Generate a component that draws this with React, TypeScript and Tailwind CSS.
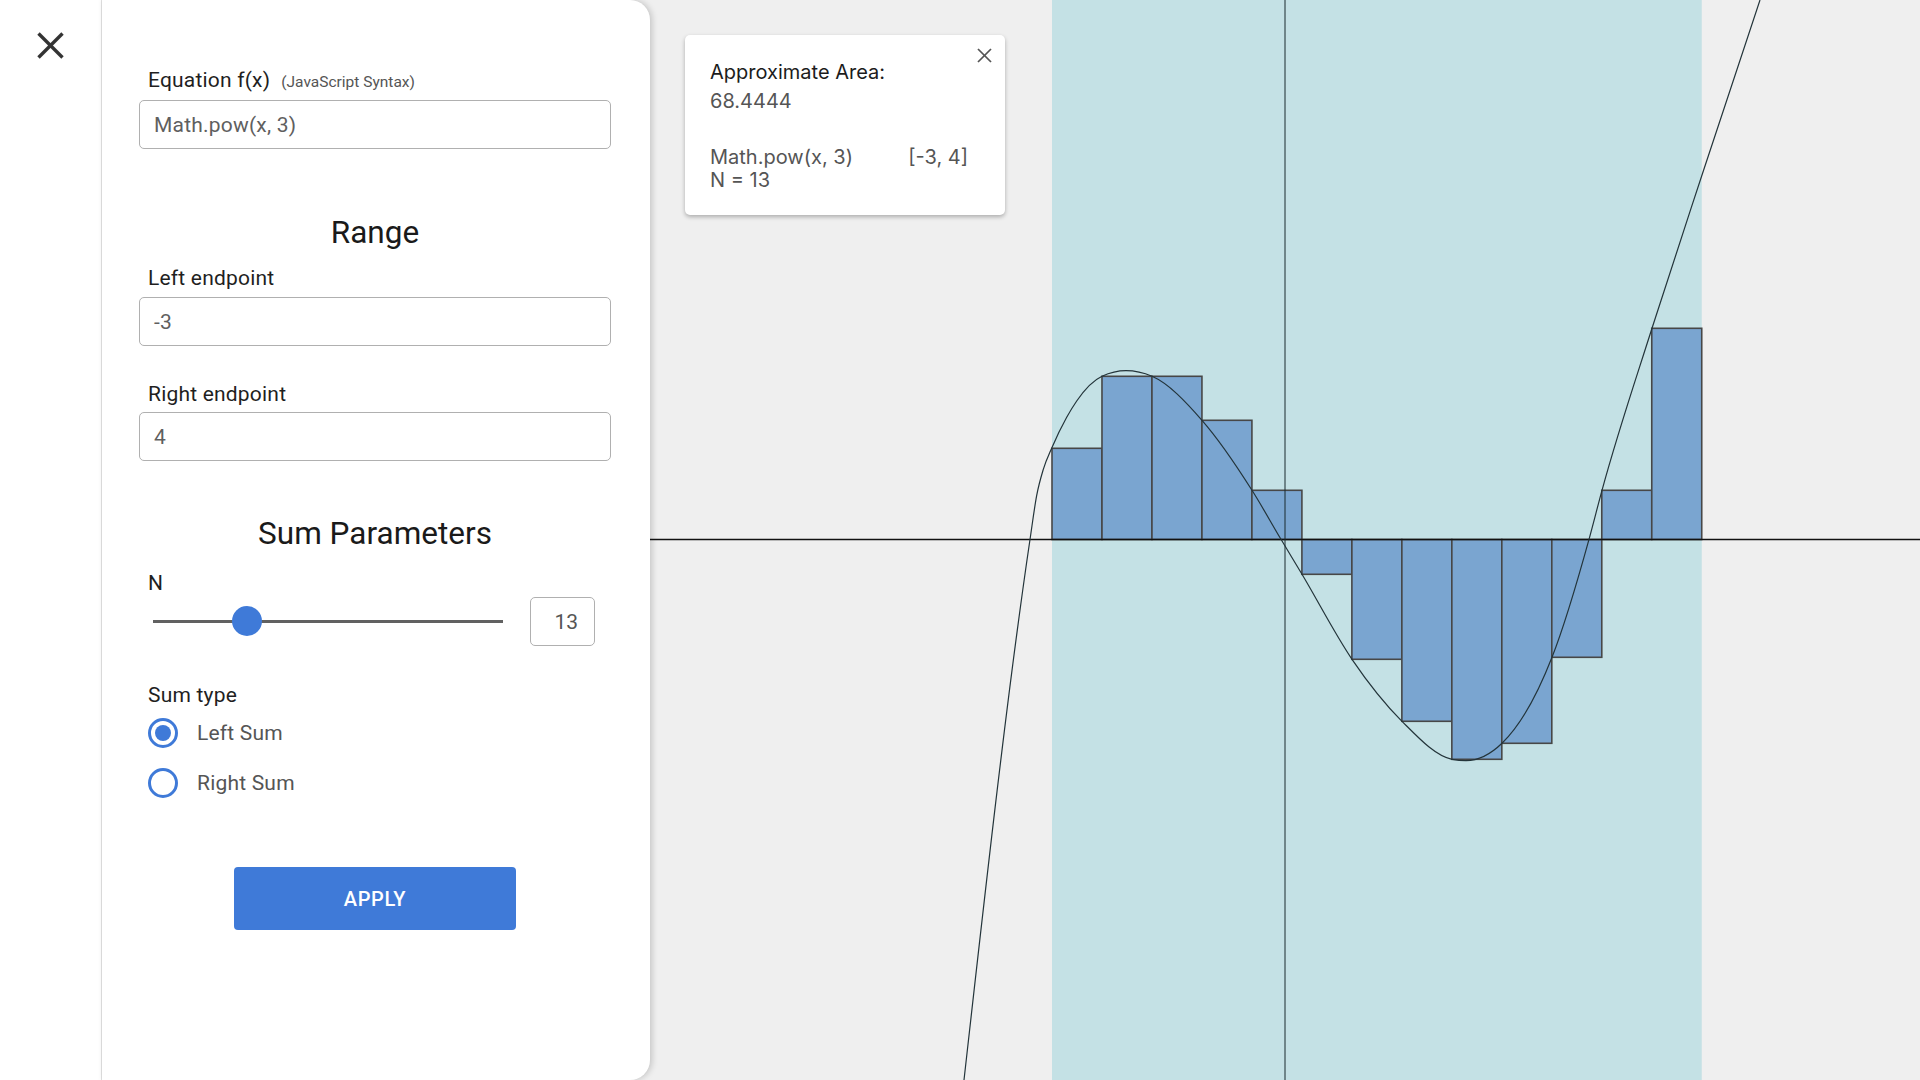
import React from "react";

type P = [number, number];

function monotonePath(pts: P[]): string {
  const n = pts.length;
  const h: number[] = [];
  const s: number[] = [];
  for (let i = 0; i < n - 1; i++) {
    h.push(pts[i + 1][0] - pts[i][0]);
    s.push((pts[i + 1][1] - pts[i][1]) / h[i]);
  }
  const m: number[] = new Array(n).fill(0);
  for (let i = 1; i < n - 1; i++) {
    const s0 = s[i - 1];
    const s1 = s[i];
    const h0 = h[i - 1];
    const h1 = h[i];
    const p = (s0 * h1 + s1 * h0) / (h0 + h1);
    m[i] =
      (Math.sign(s0) + Math.sign(s1)) *
        Math.min(Math.abs(s0), Math.abs(s1), 0.5 * Math.abs(p)) || 0;
  }
  m[0] = (3 * s[0] - m[1]) / 2;
  m[n - 1] = (3 * s[n - 2] - m[n - 2]) / 2;
  let d = `M${pts[0][0]},${pts[0][1]}`;
  for (let i = 0; i < n - 1; i++) {
    const [x0, y0] = pts[i];
    const [x1, y1] = pts[i + 1];
    const dx = h[i] / 3;
    d += ` C${x0 + dx},${y0 + m[i] * dx} ${x1 - dx},${y1 - m[i + 1] * dx} ${x1},${y1}`;
  }
  return d;
}

const CURVE: P[] = [
  [964, 1080],
  [1030, 539.5],
  [1036.7, 495.4],
  [1043.3, 469.4],
  [1052, 447.5],
  [1066.7, 417.3],
  [1076.7, 401],
  [1102, 376.3],
  [1126, 370.7],
  [1152, 376.3],
  [1202, 420.3],
  [1252, 490.3],
  [1281, 539.3],
  [1302, 574.3],
  [1352, 659.3],
  [1402, 721.3],
  [1452, 759.3],
  [1466, 760.7],
  [1502, 743.3],
  [1552, 657.3],
  [1589, 539.3],
  [1602, 490.3],
  [1652, 328.3],
  [1702, 175],
  [1760, 0],
];

const RECT_Y = [448.3, 376.3, 376.3, 420.3, 490.3, 574.3, 659.3, 721.3, 759.3, 743.3, 657.3, 490.3, 328.3];
const AXIS_Y = 539.5;
const BAND_X0 = 1052;
const RW = 49.98;

function Graph() {
  const d = monotonePath(CURVE);
  return (
    <svg
      className="absolute inset-0"
      width={1270}
      height={1080}
      viewBox="650 0 1270 1080"
    >
      <rect x={650} y={0} width={1270} height={1080} fill="#efefef" />
      <rect x={BAND_X0} y={0} width={RW * 13} height={1080} fill="#c4e1e5" />
      {RECT_Y.map((y, i) => {
        const x = BAND_X0 + RW * i;
        const top = Math.min(y, AXIS_Y);
        const hh = Math.abs(y - AXIS_Y);
        return (
          <rect
            key={i}
            x={x}
            y={top}
            width={RW}
            height={hh}
            fill="#7aa5d0"
            stroke="#474747"
            strokeWidth={1.6}
          />
        );
      })}
      <line x1={650} y1={AXIS_Y} x2={1920} y2={AXIS_Y} stroke="#111" strokeWidth={1.3} />
      <line x1={1285} y1={0} x2={1285} y2={1080} stroke="#1b2b2e" strokeWidth={1} />
      <path d={d} fill="none" stroke="#23343a" strokeWidth={1.2} />
    </svg>
  );
}

function Label({ children }: { children: React.ReactNode }) {
  return (
    <div className="pl-[9px] text-[21px] leading-[24px] tracking-[0.2px] text-[#1f1f1f]">{children}</div>
  );
}

function Field({ value }: { value: string }) {
  return (
    <div className="flex h-[49px] w-[472px] items-center rounded-[5px] border border-[#b0b0b0] pl-[14px] text-[21px] leading-[24px] tracking-[0.2px] text-[#5f5f5f]">
      {value}
    </div>
  );
}

function Radio({ checked, label }: { checked: boolean; label: string }) {
  return (
    <div className="flex h-[50px] items-center pl-[9px]">
      <div className="flex h-[30px] w-[30px] items-center justify-center rounded-full border-[3px] border-[#3f7ad8]">
        {checked && <div className="h-[16px] w-[16px] rounded-full bg-[#3f7ad8]" />}
      </div>
      <div className="ml-[19px] text-[21px] leading-[24px] tracking-[0.2px] text-[#555555]">{label}</div>
    </div>
  );
}

export default function App() {
  return (
    <div className="flex h-[1080px] w-[1920px] overflow-hidden bg-[#efefef] font-['Roboto',sans-serif]">
      {/* Sidebar */}
      <div className="h-full w-[102px] shrink-0 border-r border-[#e2e2e2] bg-white pl-[37px] pt-[32px]">
        <svg width="27" height="27" viewBox="0 0 27 27">
          <line x1="1.5" y1="1.5" x2="25.5" y2="25.5" stroke="#333" strokeWidth="3.4" />
          <line x1="25.5" y1="1.5" x2="1.5" y2="25.5" stroke="#333" strokeWidth="3.4" />
        </svg>
      </div>

      {/* Panel */}
      <div className="relative z-10 h-full w-[548px] shrink-0 rounded-r-[20px] bg-white pl-[37px] pt-[68px] shadow-[2px_0_6px_rgba(0,0,0,0.18)]">
        <div className="flex w-[472px] flex-col">
          <div className="flex items-baseline pl-[9px]">
            <span className="text-[21px] leading-[24px] tracking-[0.2px] text-[#1f1f1f]">Equation f(x)</span>
            <span className="ml-[11px] text-[15.5px] leading-[24px] text-[#555555]">(JavaScript Syntax)</span>
          </div>
          <div className="mt-[6px]">
            <Field value="Math.pow(x, 3)" />
          </div>

          <div className="mt-[66px] text-center text-[31.5px] leading-[36px] text-[#1a1a1a]">Range</div>

          <div className="mt-[15px]">
            <Label>Left endpoint</Label>
          </div>
          <div className="mt-[7px]">
            <Field value="-3" />
          </div>

          <div className="mt-[36px]">
            <Label>Right endpoint</Label>
          </div>
          <div className="mt-[6px]">
            <Field value="4" />
          </div>

          <div className="mt-[55px] text-center text-[31.5px] leading-[36px] text-[#1a1a1a]">Sum Parameters</div>

          <div className="mt-[19px]">
            <Label>N</Label>
          </div>

          <div className="mt-[2px] flex h-[49px] items-center">
            <div className="relative ml-[14px] h-[30px] w-[350px]">
              <div className="absolute left-0 right-0 top-[13px] h-[3px] bg-[#616161]" />
              <div className="absolute left-[79px] top-[-1px] h-[30px] w-[30px] rounded-full bg-[#3f7ad8]" />
            </div>
            <div className="ml-[27px] flex h-[49px] w-[65px] items-center justify-end rounded-[5px] border border-[#b0b0b0] pr-[16px] text-[21px] leading-[24px] text-[#555555]">
              13
            </div>
          </div>

          <div className="mt-[37px]">
            <Label>Sum type</Label>
          </div>
          <div className="mt-[1px]">
            <Radio checked label="Left Sum" />
            <Radio checked={false} label="Right Sum" />
          </div>

          <button className="mx-auto mt-[59px] flex h-[63px] w-[282px] items-center justify-center rounded-[4px] bg-[#3f7ad8] text-[20px] font-medium leading-[24px] tracking-[0.6px] text-white">
            APPLY
          </button>
        </div>
      </div>

      {/* Graph */}
      <div className="relative h-full flex-1">
        <Graph />
        <div className="absolute left-[35px] top-[35px] h-[180px] w-[320px] rounded-[5px] bg-white pl-[25px] pt-[25px] font-['Inter',sans-serif] shadow-[0_2px_4px_rgba(0,0,0,0.28)]">
          <svg className="absolute left-[292px] top-[13px]" width="15" height="15" viewBox="0 0 15 15">
            <line x1="1" y1="1" x2="14" y2="14" stroke="#555" strokeWidth="1.7" />
            <line x1="14" y1="1" x2="1" y2="14" stroke="#555" strokeWidth="1.7" />
          </svg>
          <div className="text-[20px] leading-[24px] text-[#1c1c1c]">Approximate Area:</div>
          <div className="mt-[5px] text-[20px] leading-[24px] text-[#555555]">68.4444</div>
          <div className="mt-[33px] flex w-[258px] justify-between text-[20px] leading-[23px] text-[#555555]">
            <span>Math.pow(x, 3)</span>
            <span>[-3, 4]</span>
          </div>
          <div className="text-[20px] leading-[23px] text-[#555555]">N = 13</div>
        </div>
      </div>
    </div>
  );
}
